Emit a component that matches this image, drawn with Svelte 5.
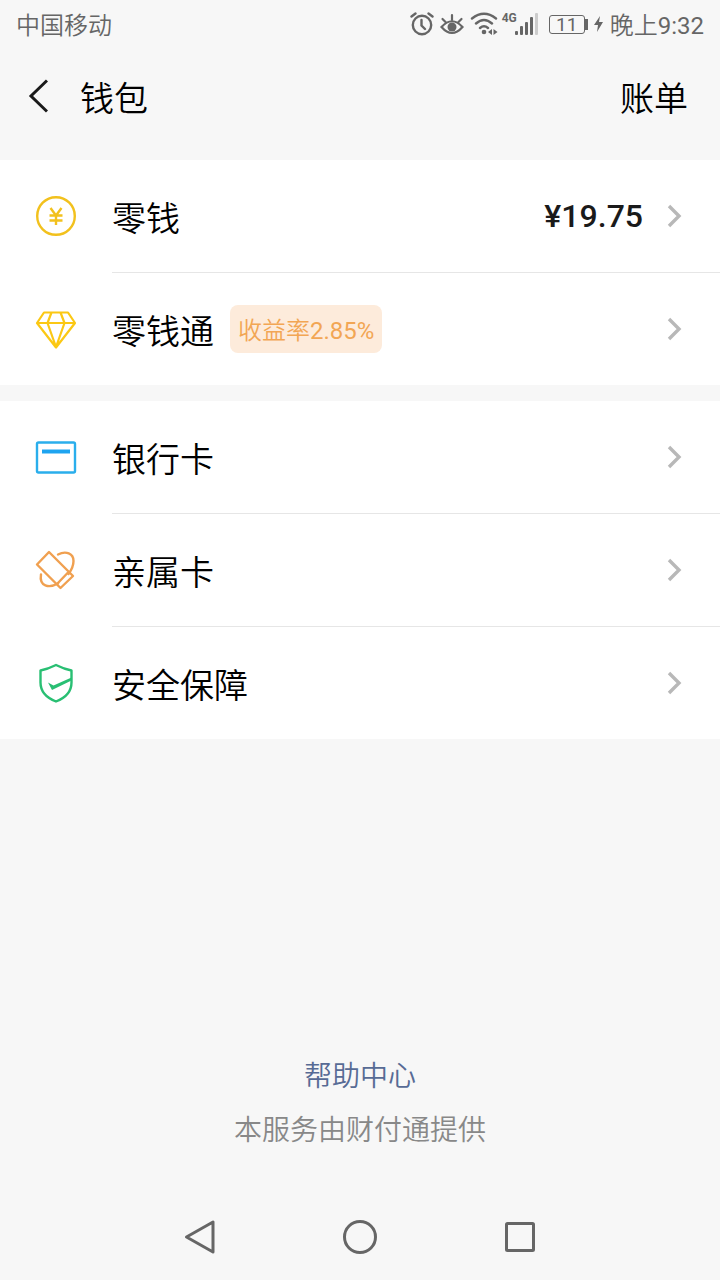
<script>
  const balance = '¥19.75';

  const groups = [
    [
      { id: 'coin', label: '零钱', value: balance },
      { id: 'diamond', label: '零钱通', tag: '收益率', rate: '2.85%' }
    ],
    [
      { id: 'card', label: '银行卡' },
      { id: 'family', label: '亲属卡' },
      { id: 'shield', label: '安全保障' }
    ]
  ];
</script>

<div class="screen">
  <div class="status">
    <span class="carrier">中国移动</span>
    <div class="status-right">
      <svg width="24" height="26" viewBox="0 0 24 26" fill="none" stroke="#666" stroke-width="2.4" stroke-linecap="round">
        <circle cx="12" cy="14" r="9.2" />
        <path d="M11.500 9v5.500l3.500 3.500M1.500 5.500l4-3M22.500 5.500l-4-3" />
      </svg>
      <svg class="eye" width="24" height="26" viewBox="0 0 24 26" fill="none" stroke="#666" stroke-width="2.2" stroke-linecap="round">
        <path d="M1.500 16Q12 4.500 22.500 16Q12 28 1.500 16Z" />
        <circle cx="12" cy="16" r="4.500" fill="#666" stroke="none" />
        <path d="M12 4v5M2.500 8l3 3M21.500 8l-3 3" />
      </svg>
      <svg class="wifi" width="28" height="26" viewBox="0 0 28 26" fill="none" stroke="#666" stroke-width="2.4" stroke-linecap="round">
        <path d="M2 7.500Q14 -2 26 7.500M6 12.500Q14 5.500 22 12.500M10 17Q14 13.500 18 17" />
        <circle cx="14" cy="21" r="2.3" fill="#666" stroke="none" />
        <path d="M22 18v6l-4-3zM23.500 18v6l4-3z" fill="#666" stroke="none" />
      </svg>
      <span class="net">4G</span>
      <svg width="24" height="26" viewBox="0 0 24 26" fill="#666">
        <rect x="0" y="20" width="3" height="4" rx="1" />
        <rect x="5" y="15" width="3" height="9" rx="1" />
        <rect x="10" y="11" width="3" height="13" rx="1" />
        <rect x="15" y="6" width="3" height="18" rx="1" />
        <rect x="20" y="2" width="3" height="22" rx="1" fill="#ccc" />
      </svg>
      <span class="battery">11</span>
      <svg class="bolt" width="9" height="18" viewBox="0 0 9 18" fill="#666">
        <path d="M6 1L0 10h4L3 17l6-10H5z" />
      </svg>
      <span class="time">晚上<span class="num">9:32</span></span>
    </div>
  </div>

  <header class="bar">
    <button class="back" aria-label="返回">
      <svg width="20" height="34" viewBox="0 0 20 34" fill="none" stroke="#1a1a1a" stroke-width="3">
        <path d="M19 1.500L3 17l16 15.500" />
      </svg>
    </button>
    <h1>钱包</h1>
    <button class="bill">账单</button>
  </header>

  <main>
    {#each groups as rows}
      <section class="group">
        {#each rows as row}
          <button class="row">
            <svg class="icon" width="48" height="48" viewBox="0 0 48 48" fill="none" stroke-width="2.4">
              {#if row.id === 'coin'}
                <g stroke="#f2c11d">
                  <circle cx="24" cy="24" r="18.8" />
                  <path d="M18.500 16l5.500 7.500 5.500-7.500M24 23.500V33M17.500 23.500h13M17.500 28.500h13" />
                </g>
              {:else if row.id === 'diamond'}
                <g stroke="#fbc814" stroke-width="2.2" stroke-linejoin="round">
                  <path d="M12 7.500h24l7 10.500L24 42.500 5 18zM5 18h38M19.500 7.500l-4 10.500L24 42l8.500-24-4-10.500" />
                </g>
              {:else if row.id === 'card'}
                <g stroke="#2aaeec">
                  <rect x="5" y="9.500" width="38" height="30" rx="1.5" />
                  <path d="M10 18.500h28" stroke="#1ea4f0" stroke-width="4" />
                </g>
              {:else if row.id === 'family'}
                <g stroke="#f0a050" stroke-width="2.4" stroke-linejoin="round" stroke-linecap="round">
                  <path d="M17 6L41 30 28.500 42 5 18.500zM36.500 26L25 38" />
                  <path d="M26 8.500C34 4.500 41.500 7.500 41.500 15c0 4-2 9-5 13M26 37.500C17 42.500 7 40.500 9 28.500" />
                </g>
              {:else}
                <g stroke="#29bf73" stroke-linejoin="round">
                  <path d="M24 6c5 2.500 10 4.500 15.500 5.500v12C39.500 33 33 39 24 42.500 15 39 8.500 33 8.500 23.500v-12C14 10.500 19 8.500 24 6z" />
                  <path d="M16 23.500l5.500 3L39.500 18.500v3L20 31z" fill="#29bf73" stroke="none" />
                </g>
              {/if}
            </svg>
            <span class="content">
              <span class="label">{row.label}</span>
              {#if row.tag}
                <span class="tag">{row.tag}<span class="num">{row.rate}</span></span>
              {/if}
              {#if row.value}
                <span class="value">{row.value}</span>
              {/if}
              <svg class="arrow" width="16" height="24" viewBox="0 0 16 24" fill="none" stroke="#b8b8b8" stroke-width="3.4">
                <path d="M2 2l10 10L2 22" />
              </svg>
            </span>
          </button>
        {/each}
      </section>
    {/each}
  </main>

  <footer>
    <a href="#help">帮助中心</a>
    <p>本服务由财付通提供</p>
  </footer>

  <nav>
    <button aria-label="返回键">
      <svg width="36" height="36" viewBox="0 0 36 36"><path d="M31 3v30L4.500 18z" /></svg>
    </button>
    <button aria-label="主屏幕">
      <svg width="36" height="36" viewBox="0 0 36 36"><circle cx="18" cy="18" r="15.5" /></svg>
    </button>
    <button aria-label="最近任务">
      <svg width="36" height="36" viewBox="0 0 36 36"><rect x="4.500" y="4.500" width="27" height="27" rx="1" /></svg>
    </button>
  </nav>
</div>

<style>
  :global(body) {
    margin: 0;
    background: #f7f7f7;
  }

  .screen {
    min-height: 100vh;
    display: flex;
    flex-direction: column;
    background: #f7f7f7;
    color: #000;
    font-family: Roboto, 'Noto Sans CJK SC', sans-serif;
    font-weight: 350;
  }

  button {
    padding: 0;
    border: none;
    background: none;
    color: inherit;
    font: inherit;
    cursor: pointer;
  }

  svg {
    display: block;
    flex: none;
  }

  .num {
    font-weight: 400;
  }

  .status {
    display: flex;
    justify-content: space-between;
    align-items: center;
    height: 48px;
    padding: 0 16px;
    color: #666;
    font-size: 24px;
    line-height: 44px;
  }

  .status-right {
    display: flex;
    align-items: center;
  }

  .carrier,
  .time {
    padding-top: 4px;
  }

  .eye,
  .wifi {
    margin-left: 6px;
  }

  .net {
    align-self: flex-start;
    margin: 10px -2px 0 4px;
    font-size: 12px;
    font-weight: 700;
    line-height: 16px;
  }

  .battery {
    display: flex;
    justify-content: center;
    align-items: center;
    width: 34px;
    height: 17px;
    margin-left: 10px;
    border: 1px solid #666;
    border-radius: 3px;
    font-size: 19px;
    font-weight: 400;
    line-height: 17px;
  }

  .battery::after {
    content: '';
    width: 3px;
    height: 11px;
    margin: 0 -11px 0 8px;
    background: #666;
  }

  .bolt {
    margin: 0 7px 0 9px;
  }

  .bar {
    display: flex;
    align-items: center;
    height: 96px;
    margin-bottom: 16px;
    padding: 0 32px 0 28px;
    font-size: 34px;
    line-height: 48px;
  }

  h1 {
    flex: 1;
    margin: 0 0 0 32px;
    font-size: 34px;
    font-weight: 350;
  }

  h1,
  .bill,
  .label {
    padding-top: 6px;
  }

  .group {
    margin-bottom: 16px;
    background: #fff;
  }

  .row {
    display: flex;
    align-items: stretch;
    width: 100%;
    height: 113px;
    padding-left: 32px;
    text-align: left;
  }

  .row:last-child {
    height: 112px;
  }

  .icon {
    margin: 32px 32px 32px 0;
  }

  .content {
    flex: 1;
    display: flex;
    align-items: center;
    padding-right: 37px;
    border-bottom: 1px solid #e6e6e6;
  }

  .row:last-child .content {
    border-bottom: none;
  }

  .label {
    font-size: 34px;
    line-height: 48px;
  }

  .tag {
    height: 46px;
    margin-left: 16px;
    padding: 2px 8px 0;
    border-radius: 8px;
    background: #fdebdb;
    color: #f2a654;
    font-size: 24px;
    line-height: 48px;
  }

  .value {
    margin-left: auto;
    color: #1a1a1a;
    font-size: 32px;
    font-weight: 500;
    line-height: 48px;
  }

  .arrow {
    margin-left: auto;
  }

  .value + .arrow {
    margin-left: 24px;
  }

  footer {
    display: flex;
    flex: 1;
    flex-direction: column;
    justify-content: flex-end;
    align-items: center;
    gap: 14px;
    padding: 32px 0 43px;
    font-size: 28px;
    line-height: 40px;
  }

  footer a {
    color: #576b95;
    text-decoration: none;
  }

  footer p {
    margin: 0;
    color: #888;
  }

  nav {
    display: flex;
    justify-content: center;
    align-items: center;
    gap: 124px;
    height: 86px;
  }

  nav svg {
    fill: none;
    stroke: #666;
    stroke-width: 3;
    stroke-linejoin: round;
  }
</style>
